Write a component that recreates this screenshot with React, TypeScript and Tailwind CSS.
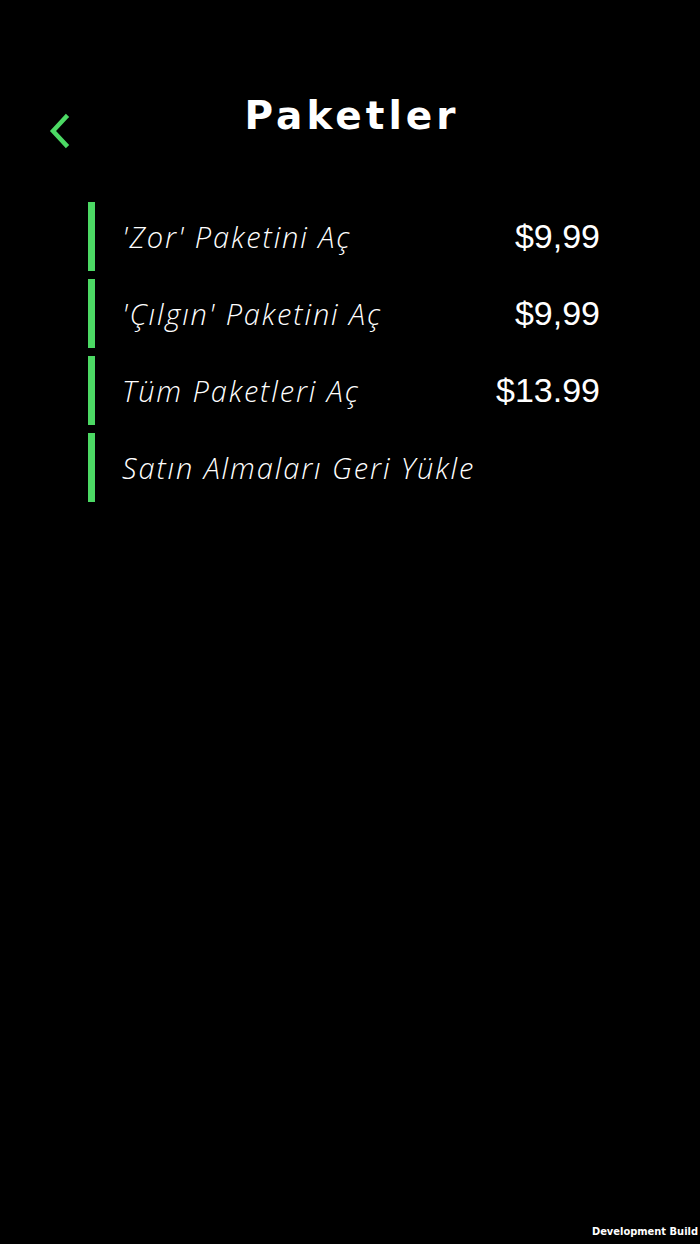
const items = [
  { label: "'Zor' Paketini Aç", price: "$9,99" },
  { label: "'Çılgın' Paketini Aç", price: "$9,99" },
  { label: "Tüm Paketleri Aç", price: "$13.99" },
  { label: "Satın Almaları Geri Yükle", price: "" },
];

export default function App() {
  return (
    <div className="w-[700px] h-[1244px] bg-black text-white flex flex-col overflow-hidden">
      {/* header */}
      <header className="grid grid-cols-[1fr_auto_1fr] items-center pt-[88px] h-[140px]">
        <div className="pl-[46px] flex items-center pt-[24px]">
          <svg width="26" height="38" viewBox="0 0 26 38" fill="none">
            <path d="M20 5 L7 19 L20 33" stroke="#4cd964" strokeWidth="4.5" strokeLinecap="square" strokeLinejoin="miter" />
          </svg>
        </div>
        <h1 className="font-['DejaVu_Sans',sans-serif] font-bold text-[39px] leading-none tracking-[4px] pl-[4px] pb-[8px]">
          Paketler
        </h1>
        <div />
      </header>

      <main className="flex flex-col gap-[8px] pl-[88px] pr-[100px] mt-[62px]">
        {items.map((it) => (
          <div
            key={it.label}
            className="flex items-center justify-between h-[69px] border-l-[7px] border-[#4cd964] pl-[27px]"
          >
            <span className="font-['Open_Sans',sans-serif] italic font-light text-[29px] tracking-[1.9px]">
              {it.label}
            </span>
            {it.price && (
              <span className="font-['Liberation_Sans',sans-serif] text-[34px]">{it.price}</span>
            )}
          </div>
        ))}
      </main>

      <div className="flex-1" />
      <footer className="flex justify-end pr-[2px] pb-[4px]">
        <span className="font-['DejaVu_Sans_Condensed','DejaVu_Sans',sans-serif] font-bold text-[11px]">
          Development Build
        </span>
      </footer>
    </div>
  );
}
